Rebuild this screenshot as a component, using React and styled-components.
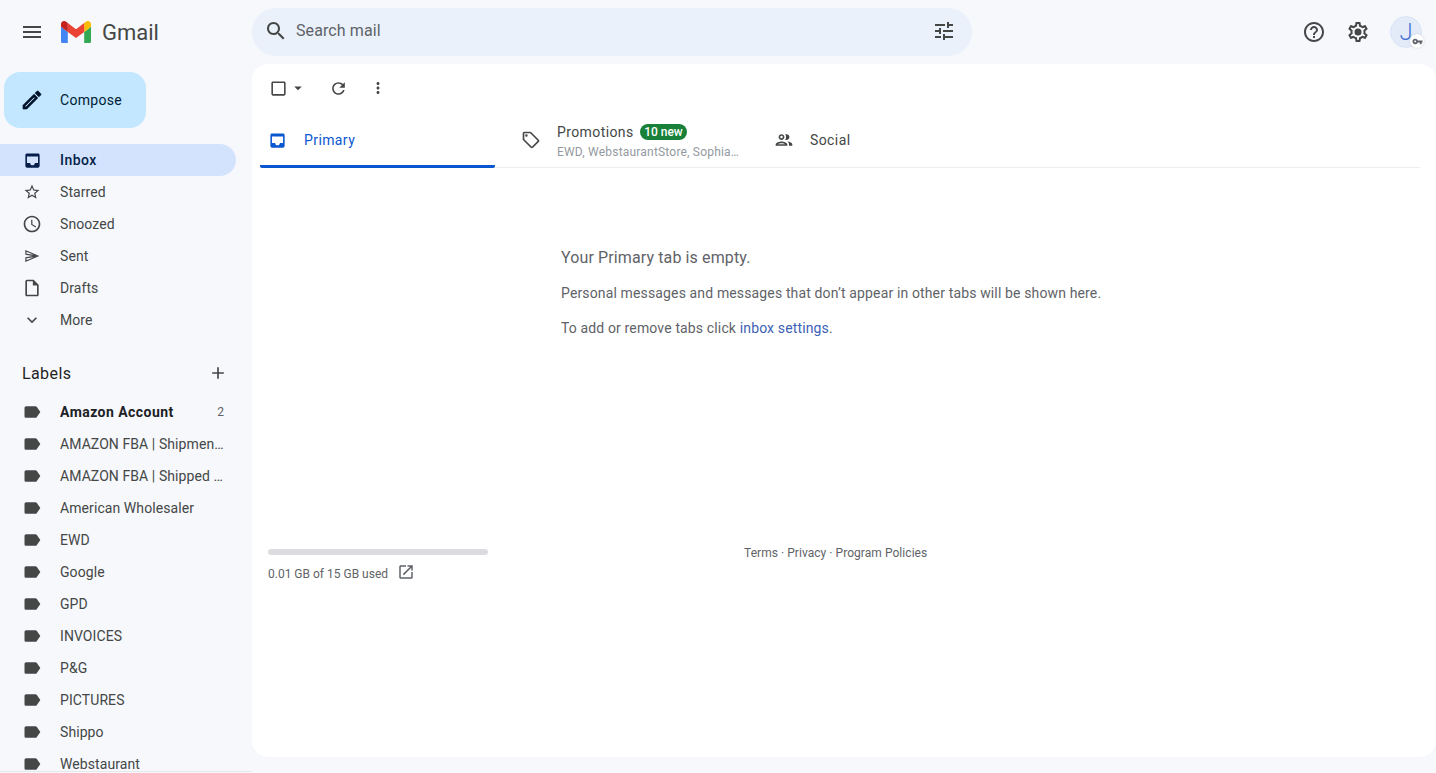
import React from 'react';
import styled, { createGlobalStyle } from 'styled-components';

const GlobalStyle = createGlobalStyle`
    html, body {
        margin: 0;
        height: 100%;
        overflow: hidden;
        background: #f6f8fc;
        font-family: Roboto, "Liberation Sans", sans-serif;
    }
    * { box-sizing: border-box; }
`;

const paths = {
    menu: 'M3 18h18v-2H3v2zm0-5h18v-2H3v2zm0-7v2h18V6H3z',
    search: 'M15.5 14h-.79l-.28-.27C15.41 12.59 16 11.11 16 9.5 16 5.91 13.09 3 9.5 3S3 5.91 3 9.5 5.91 16 9.5 16c1.61 0 3.09-.59 4.23-1.57l.27.28v.79l5 4.99L20.49 19l-4.99-5zm-6 0C7.01 14 5 11.99 5 9.5S7.01 5 9.5 5 14 7.01 14 9.5 11.99 14 9.5 14z',
    tune: 'M3 17v2h6v-2H3zM3 5v2h10V5H3zm10 16v-2h8v-2h-8v-2h-2v6h2zM7 9v2H3v2h4v2h2V9H7zm14 4v-2H11v2h10zm-6-4h2V7h4V5h-4V3h-2v6z',
    help: 'M11 18h2v-2h-2v2zm1-16C6.48 2 2 6.48 2 12s4.48 10 10 10 10-4.48 10-10S17.52 2 12 2zm0 18c-4.41 0-8-3.59-8-8s3.59-8 8-8 8 3.59 8 8-3.59 8-8 8zm0-14c-2.21 0-4 1.79-4 4h2c0-1.1.9-2 2-2s2 .9 2 2c0 2-3 1.75-3 5h2c0-2.25 3-2.5 3-5 0-2.21-1.79-4-4-4z',
    settings: 'M19.43 12.98c.04-.32.07-.64.07-.98 0-.34-.03-.66-.07-.98l2.11-1.65c.19-.15.24-.42.12-.64l-2-3.46c-.09-.16-.26-.25-.44-.25-.06 0-.12.01-.17.03l-2.49 1c-.52-.4-1.08-.73-1.69-.98l-.38-2.65C14.46 2.18 14.25 2 14 2h-4c-.25 0-.46.18-.49.42l-.38 2.65c-.61.25-1.17.59-1.69.98l-2.49-1c-.06-.02-.12-.03-.18-.03-.17 0-.34.09-.43.25l-2 3.46c-.13.22-.07.49.12.64l2.11 1.65c-.04.32-.07.65-.07.98 0 .33.03.66.07.98l-2.11 1.65c-.19.15-.24.42-.12.64l2 3.46c.09.16.26.25.44.25.06 0 .12-.01.17-.03l2.49-1c.52.4 1.08.73 1.69.98l.38 2.65c.03.24.24.42.49.42h4c.25 0 .46-.18.49-.42l.38-2.65c.61-.25 1.17-.59 1.69-.98l2.49 1c.06.02.12.03.18.03.17 0 .34-.09.43-.25l2-3.46c.12-.22.07-.49-.12-.64l-2.11-1.65zm-1.98-1.71c.04.31.05.52.05.73 0 .21-.02.43-.05.73l-.14 1.13.89.7 1.08.84-.7 1.21-1.27-.51-1.04-.42-.9.68c-.43.32-.84.56-1.25.73l-1.06.43-.16 1.13-.2 1.35h-1.4l-.19-1.35-.16-1.13-1.06-.43c-.43-.18-.83-.41-1.23-.71l-.91-.7-1.06.43-1.27.51-.7-1.21 1.08-.84.89-.7-.14-1.13c-.03-.31-.05-.54-.05-.74s.02-.43.05-.73l.14-1.13-.89-.7-1.08-.84.7-1.21 1.27.51 1.04.42.9-.68c.43-.32.84-.56 1.25-.73l1.06-.43.16-1.13.2-1.35h1.39l.19 1.35.16 1.13 1.06.43c.43.18.83.41 1.23.71l.91.7 1.06-.43 1.27-.51.7 1.21-1.07.85-.89.7.14 1.13zM12 8.5a3.5 3.5 0 1 0 0 7 3.5 3.5 0 0 0 0-7z',
    edit: 'M3 17.25V21h3.75L17.81 9.94l-3.75-3.75L3 17.25zM5.92 19H5v-.92l9.06-9.06.92.92L5.92 19zM20.71 5.63l-2.34-2.34c-.2-.2-.45-.29-.71-.29s-.51.1-.7.29l-1.83 1.83 3.75 3.75 1.83-1.83c.39-.39.39-1.02 0-1.41z',
    inbox: 'M19 3H5c-1.1 0-2 .9-2 2v14c0 1.1.9 2 2 2h14c1.1 0 2-.9 2-2V5c0-1.1-.9-2-2-2zm0 12h-4c0 1.66-1.35 3-3 3s-3-1.34-3-3H5V7h14v8z',
    star: 'M22 9.24l-7.19-.62L12 2 9.19 8.63 2 9.24l5.46 4.73L5.82 21 12 17.27 18.18 21l-1.63-7.03L22 9.24zM12 15.4l-3.76 2.27 1-4.28-3.32-2.88 4.38-.38L12 6.1l1.71 4.04 4.38.38-3.32 2.88 1 4.28L12 15.4z',
    clock: 'M11.99 2C6.47 2 2 6.48 2 12s4.47 10 9.99 10C17.52 22 22 17.52 22 12S17.52 2 11.99 2zM12 20c-4.42 0-8-3.58-8-8s3.58-8 8-8 8 3.58 8 8-3.58 8-8 8zm.5-13H11v6l5.25 3.15.75-1.23-4.5-2.67z',
    send: 'M2 3L23 12L2 21V14L13 12L2 10ZM3.8 5.8V8.5L14.5 10.2ZM3.8 18.2L14.5 13.8L3.8 15.5Z',
    draft: 'M14 2H6c-1.1 0-1.99.9-1.99 2L4 20c0 1.1.89 2 1.99 2H18c1.1 0 2-.9 2-2V8l-6-6zM6 20V4h7v5h5v11H6z',
    expand: 'M16.59 8.59L12 13.17 7.41 8.59 6 10l6 6 6-6z',
    add: 'M19 13h-6v6h-2v-6H5v-2h6V5h2v6h6v2z',
    label: 'M17.63 5.84C17.27 5.33 16.67 5 16 5L5 5.01C3.9 5.01 3 5.9 3 7v10c0 1.1.9 1.99 2 1.99L16 19c.67 0 1.27-.33 1.63-.84L22 12l-4.37-6.16z',
    checkbox: 'M19 5v14H5V5h14m0-2H5c-1.1 0-2 .9-2 2v14c0 1.1.9 2 2 2h14c1.1 0 2-.9 2-2V5c0-1.1-.9-2-2-2z',
    dropdown: 'M7 10l5 5 5-5z',
    refresh: 'M17.65 6.35C16.2 4.9 14.21 4 12 4c-4.42 0-7.99 3.58-7.99 8s3.57 8 7.99 8c3.73 0 6.84-2.55 7.73-6h-2.08c-.82 2.33-3.04 4-5.65 4-3.31 0-6-2.69-6-6s2.69-6 6-6c1.66 0 3.14.69 4.22 1.78L13 11h7V4l-2.35 2.35z',
    more: 'M12 8c1.1 0 2-.9 2-2s-.9-2-2-2-2 .9-2 2 .9 2 2 2zm0 2c-1.1 0-2 .9-2 2s.9 2 2 2 2-.9 2-2-.9-2-2-2zm0 6c-1.1 0-2 .9-2 2s.9 2 2 2 2-.9 2-2-.9-2-2-2z',
    tag: 'M21.41 11.58l-9-9C12.05 2.22 11.55 2 11 2H4c-1.1 0-2 .9-2 2v7c0 .55.22 1.05.59 1.42l9 9c.36.36.86.58 1.41.58s1.05-.22 1.41-.59l7-7c.37-.36.59-.86.59-1.41s-.23-1.06-.59-1.42zM13 20.01L4 11V4h7v-.01l9 9-7 7.02zM6.5 5a1.5 1.5 0 1 0 0 3 1.5 1.5 0 0 0 0-3z',
    people: 'M9 13.75c-2.34 0-7 1.17-7 3.5V19h14v-1.75c0-2.33-4.66-3.5-7-3.5zM4.34 17c.84-.58 2.87-1.25 4.66-1.25s3.82.67 4.66 1.25H4.34zM9 12c1.93 0 3.5-1.57 3.5-3.5S10.93 5 9 5 5.5 6.57 5.5 8.5 7.07 12 9 12zm0-5c.83 0 1.5.67 1.5 1.5S9.83 10 9 10s-1.5-.67-1.5-1.5S8.17 7 9 7zm7.04 6.81c1.16.84 1.96 1.96 1.96 3.44V19h4v-1.75c0-2.02-3.5-3.17-5.96-3.44zM15 12c1.93 0 3.5-1.57 3.5-3.5S16.93 5 15 5c-.54 0-1.04.13-1.5.35.63.89 1 1.98 1 3.15s-.37 2.26-1 3.15c.46.22.96.35 1.5.35z',
    external: 'M19 19H5V5h7V3H5c-1.11 0-2 .9-2 2v14c0 1.1.89 2 2 2h14c1.1 0 2-.9 2-2v-7h-2v7zM14 3v2h3.59l-9.83 9.83 1.41 1.41L19 6.41V10h2V3h-7z',
    key: 'M12.65 10C11.83 7.67 9.61 6 7 6c-3.31 0-6 2.69-6 6s2.69 6 6 6c2.61 0 4.83-1.67 5.65-4H17v4h4v-4h2v-4H12.65zM7 14c-1.1 0-2-.9-2-2s.9-2 2-2 2 .9 2 2-.9 2-2 2z',
};

function Icon({ name, size = 20, color = '#444746', stroke = 0 }) {
    return (
        <IconSvg viewBox="0 0 24 24" $size={size} fill={color} stroke={stroke ? color : 'none'} strokeWidth={stroke}>
            <path d={paths[name]} />
        </IconSvg>
    );
}

function GmailLogo() {
    return (
        <LogoSvg viewBox="52 42 88 66">
            <path fill="#4285f4" d="M58 108h14V74L52 59v43c0 3.32 2.69 6 6 6" />
            <path fill="#34a853" d="M120 108h14c3.32 0 6-2.69 6-6V59l-20 15" />
            <path fill="#fbbc04" d="M120 48v26l20-15v-8c0-7.42-8.47-11.65-14.4-7.2" />
            <path fill="#ea4335" d="M72 74V48l24 18 24-18v26L96 92" />
            <path fill="#c5221f" d="M52 51v8l20 15V48l-5.6-4.2c-5.94-4.45-14.4-.22-14.4 7.2" />
        </LogoSvg>
    );
}

const navItems = [
    { icon: 'inbox', text: 'Inbox', active: true, size: 19 },
    { icon: 'star', text: 'Starred', size: 18 },
    { icon: 'clock', text: 'Snoozed' },
    { icon: 'send', text: 'Sent', size: 16 },
    { icon: 'draft', text: 'Drafts' },
    { icon: 'expand', text: 'More' },
];

const labels = [
    { text: 'Amazon Account', count: 2 },
    { text: 'AMAZON FBA | Shipment Created' },
    { text: 'AMAZON FBA | Shipped to FBA' },
    { text: 'American Wholesaler' },
    { text: 'EWD' },
    { text: 'Google' },
    { text: 'GPD' },
    { text: 'INVOICES' },
    { text: 'P&G' },
    { text: 'PICTURES' },
    { text: 'Shippo' },
    { text: 'Webstaurant' },
];

export default function App() {
    return (
        <Page>
            <GlobalStyle />
            <Header>
                <Brand>
                    <MenuButton><Icon name="menu" size={24} color="#444746" /></MenuButton>
                    <GmailLogo />
                    <Wordmark>Gmail</Wordmark>
                </Brand>
                <SearchBar>
                    <Icon name="search" size={24} />
                    <SearchText>Search mail</SearchText>
                    <Icon name="tune" size={24} />
                </SearchBar>
                <HeaderActions>
                    <Icon name="help" size={24} />
                    <Icon name="settings" size={24} />
                    <Avatar>
                        J
                        <KeyBadge><Icon name="key" size={11} color="#5f6368" /></KeyBadge>
                    </Avatar>
                </HeaderActions>
            </Header>
            <Body>
                <Sidebar>
                    <Compose>
                        <Icon name="edit" size={24} color="#00122a" stroke={0.7} />
                        Compose
                    </Compose>
                    <NavList>
                        {navItems.map((item) => (
                            <NavRow key={item.text} $active={item.active}>
                                <NavIcon>
                                    <Icon name={item.icon} size={item.size || 20} color={item.active ? '#041e49' : '#444746'} />
                                </NavIcon>
                                <RowText>{item.text}</RowText>
                            </NavRow>
                        ))}
                    </NavList>
                    <LabelsHeader>
                        Labels
                        <Icon name="add" size={20} />
                    </LabelsHeader>
                    <NavList>
                        {labels.map((label) => (
                            <NavRow key={label.text} $bold={label.count}>
                                <NavIcon><Icon name="label" color="#444746" /></NavIcon>
                                <RowText>{label.text}</RowText>
                                {label.count && <Count>{label.count}</Count>}
                            </NavRow>
                        ))}
                    </NavList>
                </Sidebar>
                <Main>
                    <Toolbar>
                        <CheckGroup>
                            <Icon name="checkbox" size={19} />
                            <Icon name="dropdown" size={18} />
                        </CheckGroup>
                        <Icon name="refresh" size={19} />
                        <Icon name="more" size={18} />
                    </Toolbar>
                    <Tabs>
                        <Tab $active $width={235}>
                            <Icon name="inbox" size={19} color="#0b57d0" />
                            <TabTitle $active>Primary</TabTitle>
                        </Tab>
                        <Tab $width={253}>
                            <Icon name="tag" size={20} />
                            <PromoText>
                                <PromoTop>
                                    <TabTitle>Promotions</TabTitle>
                                    <NewBadge>10 new</NewBadge>
                                </PromoTop>
                                <TabSnippet>EWD, WebstaurantStore, Sophia…</TabSnippet>
                            </PromoText>
                        </Tab>
                        <Tab $width={200}>
                            <Icon name="people" size={20} />
                            <TabTitle>Social</TabTitle>
                        </Tab>
                    </Tabs>
                    <EmptyState>
                        <EmptyTitle>Your Primary tab is empty.</EmptyTitle>
                        <EmptyLine>Personal messages and messages that don’t appear in other tabs will be shown here.</EmptyLine>
                        <EmptyLine>To add or remove tabs click <SettingsLink>inbox settings</SettingsLink>.</EmptyLine>
                    </EmptyState>
                    <Footer>
                        <Storage>
                            <StorageBar />
                            <StorageText>
                                <StorageLabel>0.01 GB of 15 GB used</StorageLabel>
                                <Icon name="external" size={18} color="#5f6368" />
                            </StorageText>
                        </Storage>
                        <FooterLinks>Terms · Privacy · Program Policies</FooterLinks>
                    </Footer>
                </Main>
            </Body>
        </Page>
    );
}

// styles
const IconSvg = styled.svg`
    width: ${(p) => p.$size}px;
    height: ${(p) => p.$size}px;
    flex-shrink: 0;
    display: block;
`;

const LogoSvg = styled.svg`
    width: 30px;
    height: 22.5px;
    margin: 0 11px 0 17px;
    flex-shrink: 0;
`;

const Page = styled.div`
    width: 1436px;
    height: 773px;
    display: flex;
    flex-direction: column;
    overflow: hidden;
    background: #f6f8fc;
    color: #1f1f1f;
`;

const Header = styled.header`
    height: 64px;
    flex-shrink: 0;
    display: flex;
    align-items: center;
`;

const Brand = styled.div`
    width: 252px;
    display: flex;
    align-items: center;
    padding-left: 20px;
`;

const MenuButton = styled.div`
    width: 24px;
    height: 24px;
`;

const Wordmark = styled.span`
    font-size: 22px;
    color: #444746;
    line-height: 24px;
    position: relative;
    top: 1px;
`;

const SearchBar = styled.div`
    width: 720px;
    height: 48px;
    border-radius: 24px;
    background: #eaf1fb;
    display: flex;
    align-items: center;
    padding: 0 16px 2px 12px;
`;

const SearchText = styled.span`
    flex: 1;
    margin-left: 8px;
    padding-bottom: 2px;
    font-size: 16px;
    letter-spacing: 0.1px;
    color: #5f6368;
`;

const HeaderActions = styled.div`
    flex: 1;
    display: flex;
    align-items: center;
    justify-content: flex-end;
    gap: 20px;
    padding-right: 14px;
`;

const Avatar = styled.div`
    width: 32px;
    height: 32px;
    border-radius: 50%;
    background: #e3ebf9;
    border: 1px solid #dbe4f5;
    color: #4a74d6;
    font-size: 24px;
    font-weight: 300;
    display: flex;
    align-items: center;
    justify-content: center;
    position: relative;
`;

const KeyBadge = styled.span`
    position: absolute;
    right: -3px;
    bottom: -1px;
    width: 14px;
    height: 14px;
    border-radius: 50%;
    background: #fff;
    box-shadow: 0 0 2px rgba(0, 0, 0, 0.18);
    display: flex;
    align-items: center;
    justify-content: center;
`;

const Body = styled.div`
    flex: 1;
    display: flex;
    min-height: 0;
`;

const Sidebar = styled.aside`
    width: 252px;
    flex-shrink: 0;
    overflow: hidden;
    padding-top: 8px;
    border-bottom: 1px solid #e6e8ec;
    height: 708px;
`;

const Compose = styled.div`
    width: 142px;
    height: 56px;
    margin: 0 0 16px 4px;
    border-radius: 16px;
    background: #c2e7ff;
    color: #001d35;
    font-size: 14px;
    letter-spacing: 0.3px;
    display: flex;
    align-items: center;
    gap: 16px;
    padding-left: 16px;
`;

const NavList = styled.div`
    display: flex;
    flex-direction: column;
`;

const NavRow = styled.div`
    width: 236px;
    height: 32px;
    flex-shrink: 0;
    border-radius: 0 16px 16px 0;
    display: flex;
    align-items: center;
    gap: 18px;
    padding: 0 12px 0 22px;
    font-size: 14px;
    letter-spacing: ${(p) => (p.$active || p.$bold ? '0.45px' : '0.08px')};
    background: ${(p) => (p.$active ? '#d3e3fd' : 'transparent')};
    color: ${(p) => (p.$active ? '#041e49' : p.$bold ? '#202124' : '#444746')};
    font-weight: ${(p) => (p.$active ? 500 : p.$bold ? 700 : 400)};
`;

const NavIcon = styled.span`
    width: 20px;
    height: 20px;
    flex-shrink: 0;
    display: flex;
    align-items: center;
    justify-content: center;
`;

const RowText = styled.span`
    flex: 1;
    min-width: 0;
    white-space: nowrap;
    overflow: hidden;
    text-overflow: ellipsis;
`;

const Count = styled.span`
    font-size: 12px;
    font-weight: 400;
    letter-spacing: 0;
    color: #5f6368;
`;

const LabelsHeader = styled.div`
    width: 236px;
    height: 40px;
    margin: 17px 0 3px;
    padding: 0 8px 0 22px;
    display: flex;
    align-items: center;
    justify-content: space-between;
    font-size: 16px;
    letter-spacing: 0.4px;
    color: #1f1f1f;
`;

const Main = styled.main`
    flex: 1;
    height: 693px;
    background: #fff;
    border-radius: 16px;
    display: flex;
    flex-direction: column;
    overflow: hidden;
`;

const Toolbar = styled.div`
    height: 48px;
    flex-shrink: 0;
    display: flex;
    align-items: center;
    padding-left: 17px;
    gap: 21.5px;
`;

const CheckGroup = styled.div`
    display: flex;
    align-items: center;
    gap: 1px;
`;

const Tabs = styled.div`
    height: 56px;
    margin: 0 16px 0 8px;
    display: flex;
    border-bottom: 1px solid #eceff1;
    flex-shrink: 0;
`;

const Tab = styled.div`
    width: ${(p) => p.$width}px;
    height: ${(p) => (p.$active ? '56px' : '55px')};
    display: flex;
    align-items: center;
    gap: ${(p) => (p.$active ? '17px' : '16px')};
    padding-left: ${(p) => (p.$active ? '8px' : '26px')};
    border-bottom: ${(p) => (p.$active ? '3px solid #0b57d0' : '0')};
    border-radius: ${(p) => (p.$active ? '2px' : '0')};
    padding-top: ${(p) => (p.$active ? '3px' : '0')};
`;

const TabTitle = styled.span`
    font-size: 14px;
    letter-spacing: 0.4px;
    color: ${(p) => (p.$active ? '#0b57d0' : '#444746')};
`;

const PromoText = styled.div`
    padding-top: 3px;
`;

const PromoTop = styled.div`
    display: flex;
    align-items: center;
    gap: 6px;
    height: 18px;
`;

const NewBadge = styled.span`
    height: 16px;
    padding: 0 4.5px;
    border-radius: 8px;
    background: #188038;
    color: #fff;
    font-size: 12px;
    font-weight: 500;
    line-height: 16px;
`;

const TabSnippet = styled.div`
    font-size: 12px;
    letter-spacing: 0.2px;
    color: #949a9f;
    margin-top: 4px;
    line-height: 14px;
    white-space: nowrap;
`;

const EmptyState = styled.div`
    padding: 80px 0 0 309px;
    height: 381px;
    flex-shrink: 0;
    color: #5f6368;
`;

const EmptyTitle = styled.div`
    font-size: 16px;
    letter-spacing: 0.12px;
    line-height: 20px;
    margin-bottom: 16px;
`;

const EmptyLine = styled.div`
    font-size: 14px;
    letter-spacing: 0.14px;
    line-height: 18px;
    margin-bottom: 17px;
`;

const SettingsLink = styled.span`
    color: #3c5fb5;
`;

const Footer = styled.div`
    display: flex;
    padding-left: 16px;
`;

const Storage = styled.div`
    width: 220px;
`;

const StorageBar = styled.div`
    height: 6px;
    border-radius: 3px;
    background: #dadce0;
`;

const StorageText = styled.div`
    margin-top: 8px;
    display: flex;
    align-items: center;
    gap: 9px;
    font-size: 12px;
    color: #5f6368;
`;

const StorageLabel = styled.span`
    margin-top: 4px;
`;

const FooterLinks = styled.div`
    margin-left: 256px;
    margin-top: -3px;
    font-size: 12px;
    letter-spacing: 0.05px;
    color: #5f6368;
    line-height: 14px;
`;
